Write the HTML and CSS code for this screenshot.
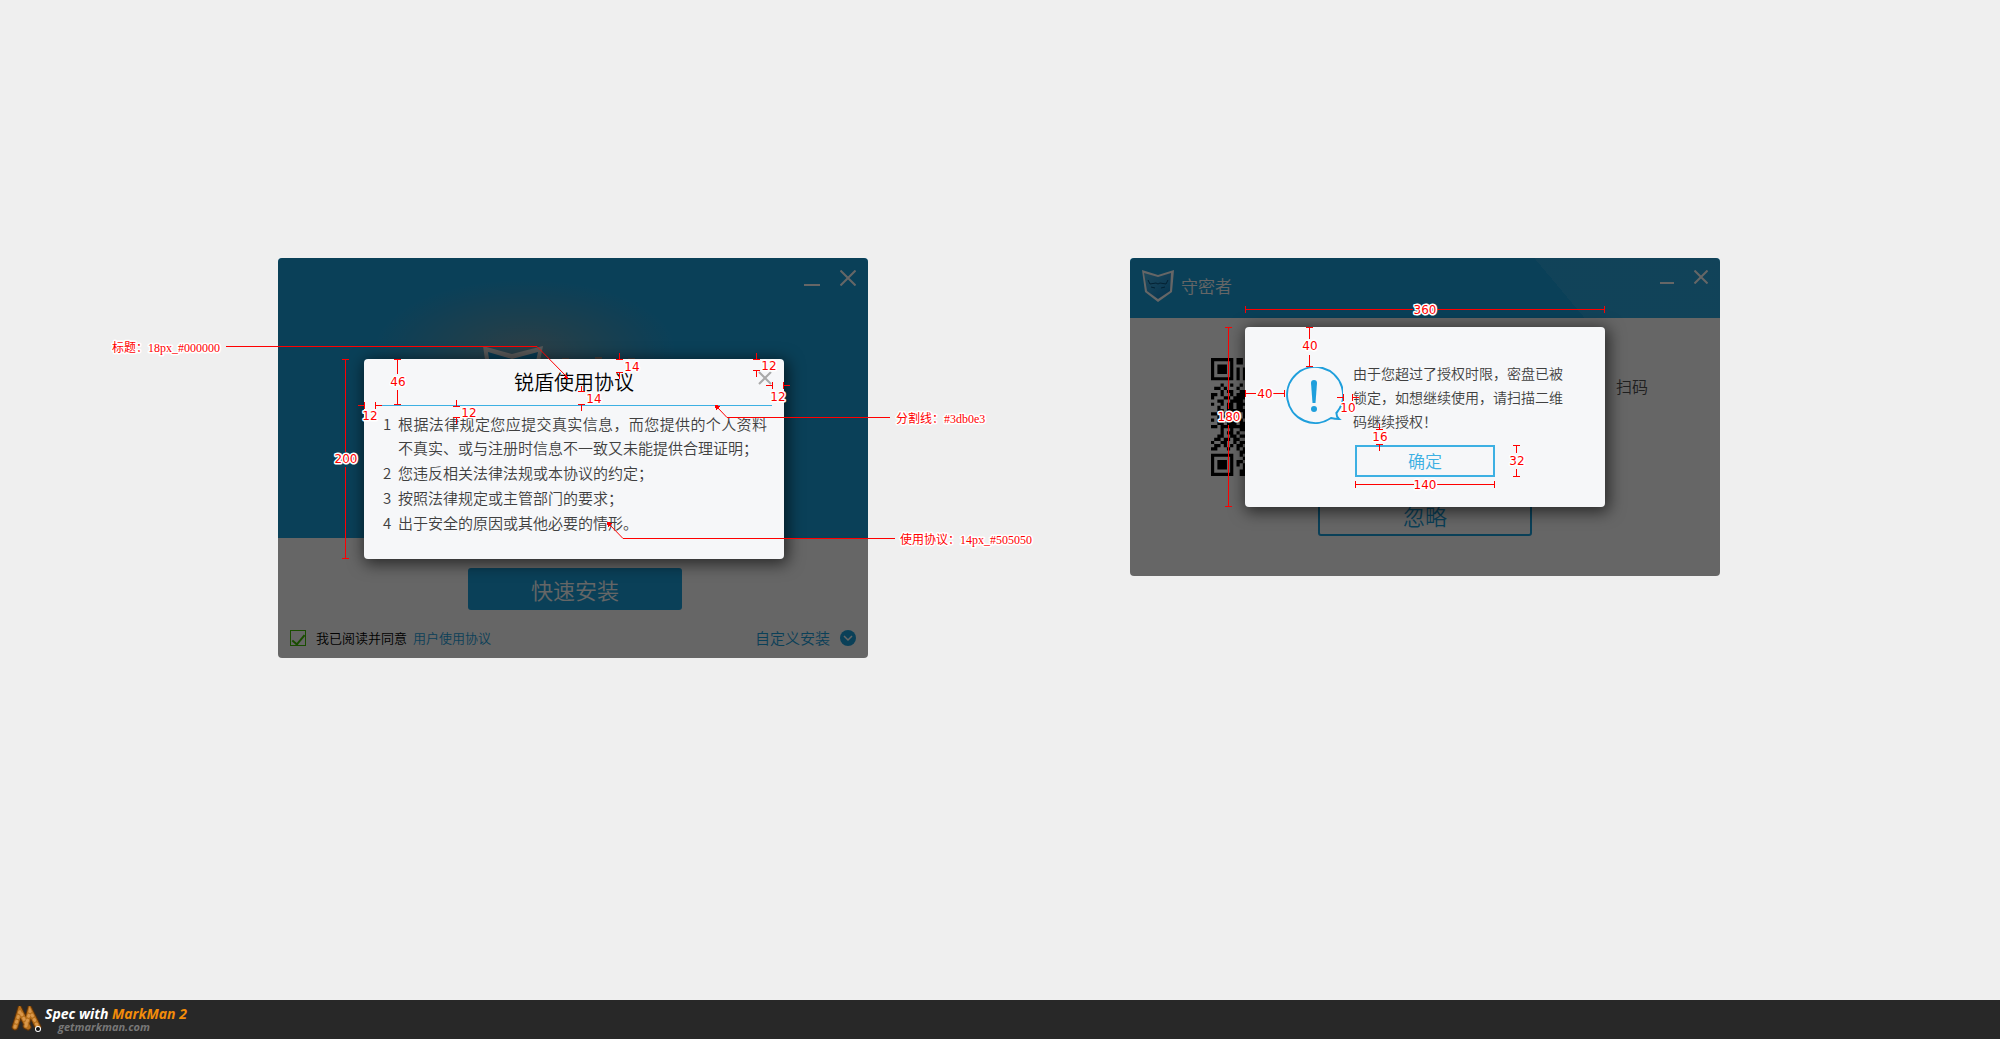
FILE: index.html
```html
<!DOCTYPE html>
<html lang="zh-CN">
<head>
<meta charset="utf-8">
<title>锐盾使用协议</title>
<link rel="stylesheet" href="styles.css">
</head>
<body>
<main class="board">
  <section class="window installer">
    <header class="hero">
      <div class="controls">
        <button class="control" aria-label="最小化"><svg width="16" height="16" viewBox="0 0 16 16"><path d="M0 15h16"/></svg></button>
        <button class="control" aria-label="关闭"><svg width="16" height="16" viewBox="0 0 16 16"><path d="M0.5 0.5l15 15M15.5 0.5l-15 15"/></svg></button>
      </div>
      <svg class="hero-logo" width="160" height="20" viewBox="0 0 160 20" aria-hidden="true">
        <path class="shield-edge" d="M0 0l29 8 31-8-4 20H3z"/>
        <path class="shield-face" d="M5 6l24 7 26-7-3 14H7z"/>
        <path class="hero-mark" d="M79 12h7v8h-7zM103 13h9v-2h7v2h9v7h-25zM145 12h7v8h-7z"/>
      </svg>
    </header>
    <div class="install-body">
      <button class="primary">快速安装</button>
      <div class="options">
        <label class="agree"><input class="tick" type="checkbox" checked><span>我已阅读并同意</span></label>
        <a class="terms" href="#">用户使用协议</a>
        <a class="custom" href="#">自定义安装
          <svg width="16" height="16" viewBox="0 0 16 16" aria-hidden="true"><circle cx="8" cy="8" r="8" fill="#1ba0dc"/><path d="M4 6l4 4 4-4" fill="none" stroke="#fff" stroke-width="1.5"/></svg>
        </a>
      </div>
    </div>
    <div class="scrim scrim-install">
      <div class="dialog agreement" role="dialog" aria-label="锐盾使用协议">
        <header class="agreement-head">
          <h2 class="agreement-title">锐盾使用协议</h2>
          <button class="dismiss" aria-label="关闭"><svg width="14" height="14" viewBox="0 0 14 14"><path d="M1 1l12 12M13 1L1 13"/></svg></button>
        </header>
        <ol class="clauses">
          <li><span class="num">1</span><p>根据法律规定您应提交真实信息，而您提供的个人资料不真实、或与注册时信息不一致又未能提供合理证明；</p></li>
          <li><span class="num">2</span><p>您违反相关法律法规或本协议的约定；</p></li>
          <li><span class="num">3</span><p>按照法律规定或主管部门的要求；</p></li>
          <li><span class="num">4</span><p>出于安全的原因或其他必要的情形。</p></li>
        </ol>
      </div>
    </div>
    <svg class="marks" width="590" height="400" viewBox="278 258 590 400">
      <path d="M226 346.5H537M727 417.5H890M623 538.5H895"/>
      <path class="lead" d="M537 346.5L566 376M718 408L727 417.5M610 525L623 538.5"/>
      <path class="tip" d="M568 379l-5-1 4-4zM715 405l5 1-4 4zM607 522l5 1-4 4z"/>
      <path d="M345.5 359V452M345.500 467V558M342 359.5h7M342 558.5h7"/>
      <path d="M397.5 359V374M397.5 390V405M394 359.5h7M394 404.5h7"/>
      <path d="M358 405.5h6M376 405.5h6M364.5 402v7M375.5 402v7"/>
      <path d="M456.5 400v6M453 406.5h7M453 417.5h7M456.5 418v6"/>
      <path d="M619.5 353v6M616 359.5h7M616 372.5h7M619.5 373v6"/>
      <path d="M581.5 386v6M578 391.5h7M578 404.5h7M581.5 405v6"/>
      <path d="M756.5 353v6M753 359.5h7M753 370.5h7M756.5 371v6"/>
      <path d="M766 385.5h6M784 385.5h6M772.5 382v7M783.5 382v7"/>
      <g class="sizes">
        <text x="346" y="463">200</text><text x="398" y="386">46</text>
        <text x="370" y="420">12</text><text x="469" y="417">12</text>
        <text x="632" y="371">14</text><text x="594" y="403">14</text>
        <text x="769" y="370">12</text><text x="778" y="401">12</text>
      </g>
      <g class="notes">
        <text x="112" y="352">标题：18px_#000000</text>
        <text x="896" y="423">分割线：#3db0e3</text>
        <text x="900" y="544">使用协议：14px_#505050</text>
      </g>
    </svg>
  </section>

  <section class="window keeper">
    <header class="bar">
      <svg width="32" height="32" viewBox="0 0 32 32" aria-hidden="true">
        <defs><linearGradient id="face" x1="0" y1="0" x2="1" y2="1"><stop offset="0" stop-color="#4db8e8"/><stop offset="1" stop-color="#0b7fc4"/></linearGradient></defs>
        <path d="M0 0l16 5 16-5-2 22-14 10L3 22z" fill="#fff"/>
        <path d="M2 3l14 4 13-4-1 18-12 8-11-8z" fill="url(#face)"/>
        <path d="M6 10l2 4 6-1 2 1 2-1 6 1 2-4M9 17l4 1M19 18l4-1" fill="none" stroke="#09527d"/>
      </svg>
      <h1 class="bar-title">守密者</h1>
      <div class="controls">
        <button class="control" aria-label="最小化"><svg width="14" height="14" viewBox="0 0 14 14"><path d="M0 13h14"/></svg></button>
        <button class="control" aria-label="关闭"><svg width="14" height="14" viewBox="0 0 14 14"><path d="M0.5 0.5l13 13M13.5 0.5l-13 13"/></svg></button>
      </div>
    </header>
    <div class="keeper-body">
      <div class="scan">
        <svg class="qr" id="qr" width="118" height="118" viewBox="0 0 37 37" role="img" aria-label="二维码"></svg>
        <p>扫码</p>
      </div>
      <button class="secondary">忽略</button>
    </div>
    <div class="scrim">
      <div class="dialog alert" role="alertdialog" aria-label="授权">
        <svg class="bubble" width="58" height="60" viewBox="0 0 58 60" aria-hidden="true">
          <path d="M51.500 46A28 28 0 1 0 46 51Q50 52 54 52Q51 49.500 51.500 45" fill="none" stroke="#1f9fdc" stroke-width="2"/>
          <path d="M26 16a3 3 0 0 1 6 0L30.500 36h-3z" fill="#1f9fdc"/><circle cx="29" cy="42" r="3" fill="#1f9fdc"/>
        </svg>
        <div class="alert-main">
          <p class="alert-text">由于您超过了授权时限，密盘已被锁定，如想继续使用，请扫描二维码继续授权！</p>
          <button class="confirm">确定</button>
        </div>
      </div>
    </div>
    <svg class="marks" width="590" height="318" viewBox="1130 258 590 318">
      <path d="M1245 309.500H1413M1437 309.500H1605M1245.500 306v7M1604.500 306v7"/>
      <path d="M1228.500 327V409M1228.500 425V506M1225 327.500h7M1225 506.500h7"/>
      <path d="M1309.500 327V339M1309.500 355V366M1306 327.500h7M1306 366.500h7"/>
      <path d="M1245 393.500h11M1273 393.500h11M1245.500 390v7M1284.500 390v7"/>
      <path d="M1337 397.500h6M1353 397.500h6M1343.500 394v7M1352.500 394v7"/>
      <path d="M1379.500 424v6M1376 429.500h7M1376 444.500h7M1379.500 445v6"/>
      <path d="M1355 484.500h59M1437 484.500h58M1355.500 481v7M1494.500 481v7"/>
      <path d="M1516.500 445v8M1516.500 469v8M1513 445.500h7M1513 476.500h7"/>
      <g class="sizes">
        <text x="1425" y="314">360</text><text x="1229" y="421">180</text>
        <text x="1310" y="350">40</text><text x="1265" y="398">40</text>
        <text x="1348" y="412">10</text><text x="1380" y="441">16</text>
        <text x="1425" y="489">140</text><text x="1517" y="465">32</text>
      </g>
    </svg>
  </section>
</main>
<footer class="credit">
  <svg width="32" height="28" viewBox="0 0 32 28" aria-hidden="true">
    <g fill="none" stroke-linecap="round">
      <path d="M4 21L9 5L17 21M15 20L19 5L27 21" stroke="#5f3208" stroke-width="7"/>
      <path d="M4 21L9 5L17 21M15 20L19 5L27 21" stroke="#b56f1c" stroke-width="5"/>
      <path d="M4 21L9 5L17 21M15 20L19 5L27 21" stroke="#d9974a" stroke-width="3" stroke-dasharray="1 4"/>
    </g>
    <circle cx="27" cy="23" r="3" fill="#fff"/><circle cx="27" cy="23" r="2" fill="#111"/>
  </svg>
  <div>
    <p class="credit-name">Spec with <span>MarkMan 2</span></p>
    <p class="credit-site">getmarkman.com</p>
  </div>
</footer>
<script src="qr.js"></script>
</body>
</html>
```
FILE: styles.css
```css
* { box-sizing: border-box; margin: 0; padding: 0; }

body {
  display: flex;
  flex-direction: column;
  min-height: 100vh;
  background: #efefef;
  font-family: "Noto Sans CJK SC", sans-serif;
  font-weight: 350;
  color: #000;
}

button { font: inherit; border: 0; background: none; }
a { color: #1ba0dc; text-decoration: none; }
svg { display: block; flex: none; }

.board {
  flex: 1;
  display: flex;
  justify-content: space-between;
  align-items: flex-start;
  padding: 258px 280px 40px 278px;
}

.window {
  position: relative;
  flex: none;
  display: flex;
  flex-direction: column;
  width: 590px;
  border-radius: 4px;
  background: #fff;
}

.hero {
  display: flex;
  flex-direction: column;
  justify-content: space-between;
  height: 280px;
  padding: 12px;
  border-radius: 4px 4px 0 0;
  background: radial-gradient(ellipse 150px 70px at 247px 92px, #6f9cae, #4a9dc0 40%, #1ba0dc) #1ba0dc;
}

.controls { display: flex; justify-content: flex-end; gap: 20px; margin-left: auto; }
.control { display: block; }
.control svg { fill: none; stroke: #fff; stroke-width: 2; }

.hero-logo { margin: 0 auto 160px 193px; }
.shield-edge { fill: #ddd; }
.shield-face { fill: #1592cc; }
.hero-mark { fill: #b39c95; }

.install-body {
  display: flex;
  flex-direction: column;
  align-items: center;
  gap: 18px;
  padding: 30px 12px 10px;
}

.primary {
  width: 214px;
  height: 42px;
  margin-left: 4px;
  border-radius: 3px;
  background: #1ba0dc;
  color: #fff;
  font-size: 22px;
  line-height: 40px;
}

.options {
  display: flex;
  align-items: center;
  align-self: stretch;
  font-size: 13px;
  line-height: 20px;
}

.agree { display: flex; align-items: center; gap: 10px; }

.tick {
  appearance: none;
  display: grid;
  place-items: center;
  width: 16px;
  height: 16px;
  border: 1px solid #40c000;
}
.tick:checked::before {
  content: "";
  width: 5px;
  height: 11px;
  border: solid #40c000;
  border-width: 0 2px 2px 0;
  transform: rotate(40deg);
}

.terms { margin-left: 6px; }

.custom {
  display: flex;
  align-items: center;
  gap: 10px;
  margin-left: auto;
  font-size: 15px;
}

.scrim {
  position: absolute;
  inset: 0;
  display: grid;
  place-items: center;
  border-radius: 4px;
  background: rgba(0, 0, 0, 0.6);
  overflow: hidden;
}
.scrim-install { padding: 2px 0 0 2px; }

.dialog {
  border-radius: 4px;
  background: #f6f7f9;
  box-shadow: 2px 3px 16px 2px rgba(0, 0, 0, 0.6);
}

.agreement { width: 420px; height: 200px; padding: 0 12px; }

.agreement-head {
  display: grid;
  grid-template-columns: 1fr auto 1fr;
  height: 47px;
  border-bottom: 1px solid #3db0e3;
}
.agreement-title {
  grid-column: 2;
  font-size: 20px;
  font-weight: 350;
  line-height: 46px;
}
.dismiss { justify-self: end; align-self: start; padding-top: 12px; }
.dismiss svg { fill: none; stroke: #a9a9a9; stroke-width: 2; }

.clauses {
  display: flex;
  flex-direction: column;
  gap: 1px;
  padding: 6px 5px 0 7px;
  list-style: none;
  color: #404040;
  font-size: 15px;
  line-height: 24px;
}
.clauses li { display: flex; }
.clauses p { flex: 1; text-align: justify; }
.num { width: 15px; }

.marks { position: absolute; inset: 0; overflow: visible; pointer-events: none; }
.marks path { fill: none; stroke: #f00; shape-rendering: crispEdges; }
.marks .lead { shape-rendering: auto; }
.marks .tip { fill: #f00; stroke: none; }
.marks text {
  fill: #f00;
  stroke: #fff;
  stroke-width: 3px;
  stroke-linejoin: round;
  paint-order: stroke;
  font-weight: 400;
  font-size: 12px;
}
.sizes text { font-family: "DejaVu Sans", sans-serif; text-anchor: middle; }
.notes text { font-family: "Liberation Serif", "Noto Sans CJK SC", serif; }

.bar {
  display: flex;
  align-items: flex-start;
  gap: 7px;
  height: 60px;
  padding: 12px;
  border-radius: 4px 4px 0 0;
  background: linear-gradient(50deg, transparent 71%, rgba(255, 255, 255, 0.07) 71%) #1ba0dc;
}
.bar-title { color: #fff; font-size: 17px; font-weight: 350; line-height: 32px; }

.keeper-body {
  display: flex;
  flex-direction: column;
  align-items: center;
  gap: 17px;
  padding: 40px 72px;
}

.scan {
  display: flex;
  justify-content: space-between;
  align-self: stretch;
  padding-left: 9px;
  color: #505050;
  font-size: 16px;
  line-height: 56px;
}

.secondary {
  width: 214px;
  height: 43px;
  border: 2px solid #1ba0dc;
  border-radius: 3px;
  color: #1ba0dc;
  font-size: 22px;
  line-height: 38px;
}

.alert {
  display: flex;
  align-items: flex-start;
  gap: 10px;
  width: 360px;
  height: 180px;
  padding: 34px 38px 0 40px;
}
.bubble { margin-top: 6px; }
.alert-main { flex: 1; display: flex; flex-direction: column; align-items: flex-start; gap: 12px; }
.alert-text { color: #404040; font-size: 14px; line-height: 24px; }

.confirm {
  width: 140px;
  height: 32px;
  margin-left: 2px;
  border: 2px solid #3db0e3;
  color: #3db0e3;
  font-size: 17px;
  line-height: 28px;
}

.credit {
  display: flex;
  align-items: center;
  gap: 2px;
  height: 39px;
  padding-left: 11px;
  background: #282828;
  font: italic 700 14px/14px "Open Sans", sans-serif;
  color: #fff;
}
.credit-name span { color: #f28c0a; }
.credit-site { padding-left: 13px; color: #777; font-size: 11px; line-height: 12px; }
```
FILE: qr.js
```js
// Dark modules of the code, one string per row.
const rows = [
  "#######.##.###..#.##.#..##.##.#######",
  "#.....#.##.#.##..#.###.#.#....#.....#",
  "#.###.#....##.#.##..#.##..#.#.#.###.#",
  "#.###.#.#.#.#..##.#..##.#..#..#.###.#",
  "#.###.#.#.###.##..##.#..##.#..#.###.#",
  "#.....#.#.#..#..##.#.##..#.#..#.....#",
  "#######.#.#.#.#.#.#.#.#.#.#.#.#######",
  "...........##.#..##.#..#.##..........",
  "...#..#..#.#.##.#..#.##.#..#.##.#.#.#",
  ".##.#...#..##.#..##.#..#.##..#.##..#.",
  "...#.##..###.#.##.#..##.#..#.#..##.#.",
  "##.#..#.######.#..##.#..##.#..#..##.#",
  "#...##.####.#..##.#..##.#..##.#.#..#.",
  "..##..####.##.#..##.#..#.##..#.##..#.",
  "#..#.##.####.#.##.#..##.#..#.#..##.#.",
  "..#..##.##.###.#..##.#..##.#..#..##.#",
  "..##.######.#..##.#..##.#..##.#.#..#.",
  "##..##.##.###.#..##.#..#.##..#.##..#.",
  "..###.###.##.#.##.#..##.#..#.#..##.#.",
  "#.#.######.###.#..##.#..##.#..#..##.#",
  "..##.###.##.#..##.#..##.#..##.#.#..#.",
  "##.########.#.#..##.#..#.##..#.##..#.",
  "...#..#..##..#.##.#..##.#..#.#..##.#.",
  "...#.##.#...##.#..##.#..##.#..#..##.#",
  "..##..##.###...##.#..##.#..##.#.#..#.",
  ".##.##.##..#..#..##.#..#.##..#.##..#.",
  "#..##..#.###.#.##.#..##.#..#.#..##.#.",
  ".##.#.#.##.###.#..##.#..##.#..#..##.#",
  "##...#..#.#.#..##.#..##.#..##.#.#..#.",
  ".........##...#..##.#..#.##..#.##..#.",
  "#######..#.#.#.##.#..##.#..#.#..##.#.",
  "#.....#...####.#..##.#..##.#..#..##.#",
  "#.###.#.##..#..##.#..##.#..##.#.#..#.",
  "#.###.#.#.###.#..##.#..#.##..#.##..#.",
  "#.###.#...#..#.##.#..##.#..#.#..##.#.",
  "#.....#..##.##.#..##.#..##.#..#..##.#",
  "#######..##.#..##.#..##.#..##.#.#..#."
];
let d = "";
rows.forEach((row, y) => {
  [...row].forEach((cell, x) => {
    if (cell === "#") d += `M${x} ${y}h1v1h-1z`;
  });
});
const path = document.createElementNS("http://www.w3.org/2000/svg", "path");
path.setAttribute("d", d);
document.getElementById("qr").append(path);
```
